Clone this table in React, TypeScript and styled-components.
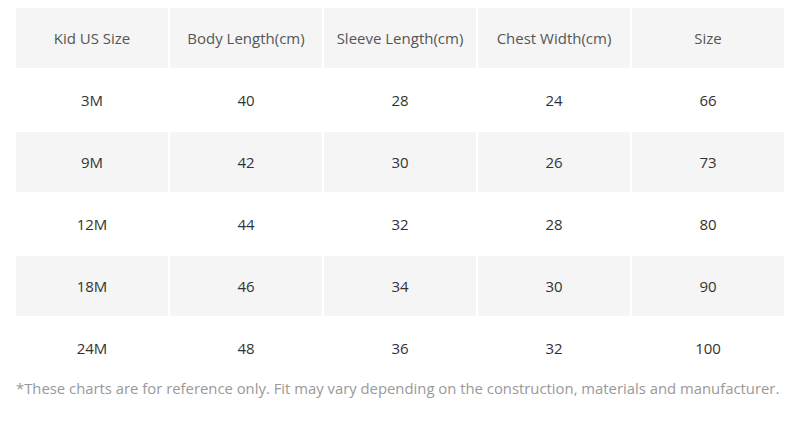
import { FC } from 'react';
import styled, { createGlobalStyle } from 'styled-components';

const GlobalStyle = createGlobalStyle`
  html, body {
    margin: 0;
    padding: 0;
    background: #ffffff;
  }
  body {
    font-family: 'Open Sans', 'Noto Sans', sans-serif;
  }
`;

const SPage = styled.div`
  width: 800px;
  padding: 8px 16px 0;
  box-sizing: border-box;
`;

const STable = styled.div`
  display: grid;
  grid-template-columns: repeat(5, 152px);
  grid-auto-rows: 60px;
  gap: 2px;
`;

const SCell = styled.div<{ shaded: boolean; head?: boolean }>`
  display: flex;
  align-items: center;
  justify-content: center;
  font-size: 15px;
  color: ${({ head }) => (head ? '#555555' : '#333333')};
  background: ${({ shaded }) => (shaded ? '#f5f5f5' : '#ffffff')};
`;

const SNote = styled.p`
  margin: 0;
  font-size: 14.85px;
  line-height: 20px;
  color: #999999;
  white-space: nowrap;
`;

const HEADERS = [
  'Kid US Size',
  'Body Length(cm)',
  'Sleeve Length(cm)',
  'Chest Width(cm)',
  'Size',
];

const ROWS = [
  ['3M', '40', '28', '24', '66'],
  ['9M', '42', '30', '26', '73'],
  ['12M', '44', '32', '28', '80'],
  ['18M', '46', '34', '30', '90'],
  ['24M', '48', '36', '32', '100'],
];

const App: FC = () => {
  return (
    <>
      <GlobalStyle />
      <SPage>
        <STable>
          {HEADERS.map((h) => (
            <SCell key={h} shaded head>
              {h}
            </SCell>
          ))}
          {ROWS.map((row, i) =>
            row.map((value, j) => (
              <SCell key={`${i}-${j}`} shaded={i % 2 === 1}>
                {value}
              </SCell>
            ))
          )}
        </STable>
        <SNote>
          *These charts are for reference only. Fit may vary depending on the
          construction, materials and manufacturer.
        </SNote>
      </SPage>
    </>
  );
};

export default App;
